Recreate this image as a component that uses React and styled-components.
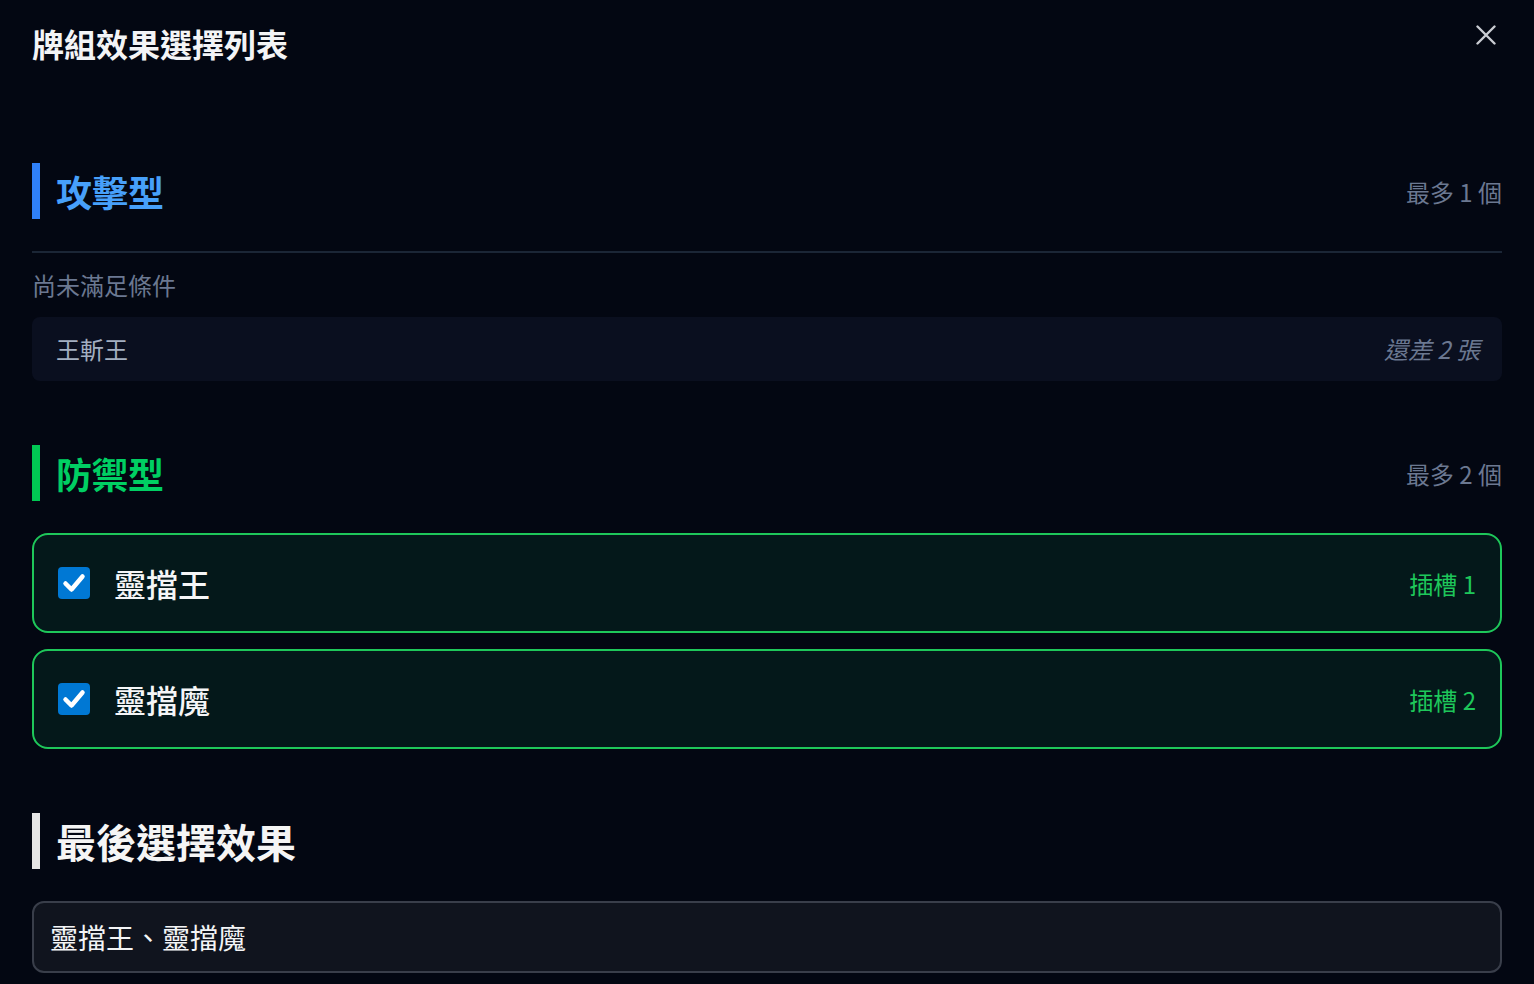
import React from 'react';
import styled, {createGlobalStyle} from 'styled-components';

const GlobalStyle = createGlobalStyle`
  html, body {
    margin: 0;
    padding: 0;
    background: #030712;
  }
  body {
    font-family: "Noto Sans CJK TC", "Noto Sans", sans-serif;
    color: #f3f4f6;
  }
  * {
    box-sizing: border-box;
  }
`;

const Page = styled.div`
  min-height: 984px;
  padding: 19px 32px 12px;
  background: #030712;
`;

const Header = styled.header`
  display: flex;
  justify-content: space-between;
  align-items: flex-start;
  margin-bottom: 96px;
`;

const Title = styled.h1`
  margin: 0;
  font-size: 32px;
  line-height: 48px;
  font-weight: 700;
  color: #f3f4f6;
`;

const CloseButton = styled.button`
  width: 32px;
  height: 32px;
  padding: 0;
  border: none;
  background: none;
  display: flex;
  align-items: center;
  justify-content: center;
  color: #c9ccd2;
  cursor: pointer;
`;

const Section = styled.section`
  margin-bottom: 64px;
  &:last-child {
    margin-bottom: 0;
  }
`;

const SectionHead = styled.div`
  display: flex;
  justify-content: space-between;
  align-items: center;
  height: 56px;
  margin-bottom: 32px;
  border-left: 8px solid ${p => p.$bar};
  padding-left: 16px;
`;

const SectionTitle = styled.h2`
  margin: 0;
  font-size: ${p => p.$size || 36}px;
  line-height: 1.3;
  font-weight: 700;
  color: ${p => p.$color};
`;

const Limit = styled.span`
  font-size: 24px;
  color: #6b7891;
`;

const Divider = styled.hr`
  margin: 0;
  border: none;
  border-top: 2px solid #1b2636;
`;

const GroupLabel = styled.div`
  margin: 16px 0 16px;
  font-size: 24px;
  line-height: 32px;
  color: #6b7891;
`;

const PendingRow = styled.div`
  display: flex;
  justify-content: space-between;
  align-items: center;
  padding: 14px 22px 14px 24px;
  border-radius: 8px;
  background: #0a0f1f;
  font-size: 24px;
  line-height: 36px;
`;

const PendingName = styled.span`
  color: #a3afc1;
`;

const PendingNote = styled.span`
  color: #6b7891;
  font-style: italic;
`;

const List = styled.div`
  display: flex;
  flex-direction: column;
  gap: 16px;
`;

const OptionRow = styled.label`
  display: flex;
  align-items: center;
  gap: 24px;
  padding: 24px;
  border: 2px solid #1ec75a;
  border-radius: 16px;
  background: #04181a;
  cursor: pointer;
`;

const Box = styled.span`
  width: 32px;
  height: 32px;
  flex: none;
  border-radius: 4px;
  background: #0078d4;
  display: flex;
  align-items: center;
  justify-content: center;
`;

const OptionName = styled.span`
  flex: 1;
  font-size: 32px;
  line-height: 48px;
  font-weight: 500;
  color: #f5f6f7;
`;

const Slot = styled.span`
  font-size: 24px;
  color: #1ec75a;
`;

const ResultBox = styled.div`
  padding: 13px 16px;
  border: 2px solid #393e4a;
  border-radius: 12px;
  background: #10141e;
  font-size: 28px;
  line-height: 42px;
  color: #f3f4f6;
`;

const CloseIcon = () => (
  <svg width="20" height="20" viewBox="0 0 20 20" fill="none">
    <path d="M1.5 1.5 L18.5 18.5 M18.5 1.5 L1.5 18.5" stroke="currentColor" strokeWidth="2.4" strokeLinecap="round" />
  </svg>
);

const Check = () => (
  <Box>
    <svg width="32" height="32" viewBox="0 0 32 32" fill="none">
      <path d="M7.5 16.5 L13.5 22.5 L24.5 9.5" stroke="#fff" strokeWidth="4.5" strokeLinecap="round" strokeLinejoin="round" />
    </svg>
  </Box>
);

const defense = [
  {name: '靈擋王', slot: 1},
  {name: '靈擋魔', slot: 2},
];

export default function App() {
  return (
    <Page>
      <GlobalStyle />
      <Header>
        <Title>牌組效果選擇列表</Title>
        <CloseButton aria-label="關閉">
          <CloseIcon />
        </CloseButton>
      </Header>

      <Section>
        <SectionHead $bar="#2f80f8">
          <SectionTitle $color="#47a0fa">攻擊型</SectionTitle>
          <Limit>最多 1 個</Limit>
        </SectionHead>
        <Divider />
        <GroupLabel>尚未滿足條件</GroupLabel>
        <PendingRow>
          <PendingName>王斬王</PendingName>
          <PendingNote>還差 2 張</PendingNote>
        </PendingRow>
      </Section>

      <Section>
        <SectionHead $bar="#00c853">
          <SectionTitle $color="#00cf63">防禦型</SectionTitle>
          <Limit>最多 2 個</Limit>
        </SectionHead>
        <List>
          {defense.map(item => (
            <OptionRow key={item.name}>
              <Check />
              <OptionName>{item.name}</OptionName>
              <Slot>插槽 {item.slot}</Slot>
            </OptionRow>
          ))}
        </List>
      </Section>

      <Section>
        <SectionHead $bar="#e5e5e5">
          <SectionTitle $color="#f5f5f5" $size={40}>最後選擇效果</SectionTitle>
        </SectionHead>
        <ResultBox>靈擋王、靈擋魔</ResultBox>
      </Section>
    </Page>
  );
}
